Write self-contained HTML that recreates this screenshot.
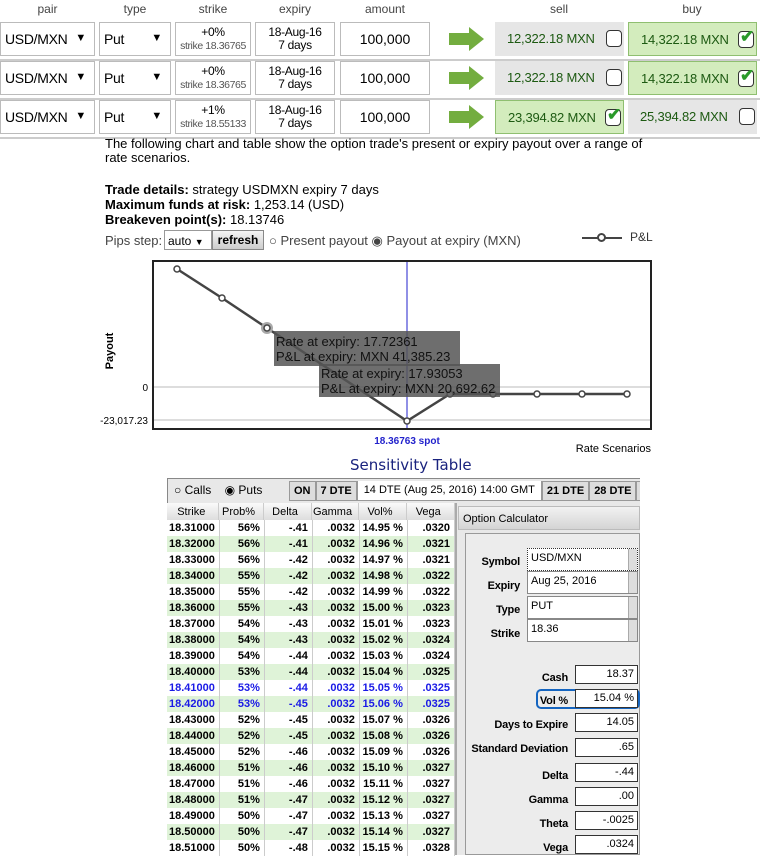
<!DOCTYPE html>
<html><head><style>
*{margin:0;padding:0;box-sizing:border-box}
body{width:760px;height:855px;overflow:hidden;background:#fff;font-family:"Liberation Sans",sans-serif;position:relative;color:#000}
.a{position:absolute}
.hd{font-size:12px;color:#444;text-align:center;top:2px}
.box{position:absolute;border:1px solid #bbb;background:#fff;font-size:14px;white-space:nowrap;overflow:hidden}
.sel{padding:8px 4px;font-size:14px;letter-spacing:-0.3px}
.tri{position:absolute;right:8px;top:9px;font-size:11px}
.c2{text-align:center;font-size:12px;line-height:13px;padding-top:3px;letter-spacing:-0.3px}
.c2 small{font-size:10.5px;color:#555;letter-spacing:-0.4px}
.amt{text-align:center;padding-top:8px}
.pr{position:absolute;font-size:13px;color:#1d5a12;padding-top:9px;padding-left:12px;letter-spacing:-0.2px;white-space:nowrap}
.cb{position:absolute;width:16px;height:17px;border:1.5px solid #333;border-radius:4px;background:#fff;top:8px;right:2px}
.ck{position:absolute;left:1px;top:-5px;color:#2a9a2a;font-size:17px;font-weight:bold}
table{border-collapse:collapse}
.tb td{height:16px;font-size:11px;font-weight:bold;text-align:right;padding-right:4px;border-right:1px solid #ccc}
.tb td:first-child{text-align:left;padding-left:2px}
.tb tr:nth-child(even) td{background:#dff3d8}
.tb tr.bl td{color:#1a1ae6}
.lb{position:absolute;font-size:11px;font-weight:bold;text-align:right;white-space:nowrap;letter-spacing:-0.2px}
.fld{position:absolute;border:1px solid #333;background:#fff;font-size:11px;text-align:right;padding:2px 3px;height:19px}
.dd{position:absolute;border:1px solid #888;background:#fff;font-size:11px;padding:3px 3px;height:23px;width:111px}
.dd:after{content:"";position:absolute;right:0;top:0;width:8px;height:21px;background:#ddd;border-left:1px solid #aaa}
</style></head><body>
<div class="a hd" style="left:0;width:95px">pair</div>
<div class="a hd" style="left:99px;width:72px">type</div>
<div class="a hd" style="left:175px;width:76px">strike</div>
<div class="a hd" style="left:255px;width:80px">expiry</div>
<div class="a hd" style="left:340px;width:90px">amount</div>
<div class="a hd" style="left:495px;width:128px">sell</div>
<div class="a hd" style="left:628px;width:128px">buy</div>

<div id="rows"></div>
<script>
var rs=[[22,"+0%","18.36765","12,322.18",false,"14,322.18",true],[61,"+0%","18.36765","12,322.18",false,"14,322.18",true],[100,"+1%","18.55133","23,394.82",true,"25,394.82",false]];
var h="";
rs.forEach(function(r){var y=r[0];
h+='<div class="box sel" style="left:0;top:'+y+'px;width:95px;height:34px">USD/MXN<span class="tri">▼</span></div>';
h+='<div class="box sel" style="left:99px;top:'+y+'px;width:72px;height:34px">Put<span class="tri">▼</span></div>';
h+='<div class="box c2" style="left:175px;top:'+y+'px;width:76px;height:34px">'+r[1]+'<br><small>strike '+r[2]+'</small></div>';
h+='<div class="box c2" style="left:255px;top:'+y+'px;width:80px;height:34px">18-Aug-16<br>7 days</div>';
h+='<div class="box amt" style="left:340px;top:'+y+'px;width:90px;height:34px">100,000</div>';
h+='<div class="a" style="left:449px;top:'+(y+11)+'px;width:20px;height:12px;background:#73ad3f"></div><div class="a" style="left:469px;top:'+(y+5)+'px;border-left:15px solid #73ad3f;border-top:12px solid transparent;border-bottom:12px solid transparent"></div>';
function p(x,v,c){return '<div class="pr" style="left:'+x+'px;top:'+y+'px;width:129px;height:34px;'+(c?'background:#d3ecbd;border:1px solid #8fbf70':'background:#e6e6e6')+'">'+v+' MXN<div class="cb">'+(c?'<span class="ck">✔</span>':'')+'</div></div>';}
h+=p(495,r[3],r[4])+p(628,r[5],r[6]);
h+='<div class="a" style="left:0;top:'+(y+37)+'px;width:760px;height:2px;background:#ccc"></div>';
});
document.getElementById("rows").innerHTML=h;
</script>

<div class="a" style="left:105px;top:137px;font-size:13px;line-height:14px;width:560px">The following chart and table show the option trade's present or expiry payout over a range of rate scenarios.</div>
<div class="a" style="left:105px;top:182px;font-size:13px;line-height:15px"><b>Trade details:</b> strategy USDMXN expiry 7 days<br><b>Maximum funds at risk:</b> 1,253.14 (USD)<br><b>Breakeven point(s):</b> 18.13746</div>
<div class="a" style="left:105px;top:233px;font-size:13px;color:#444">Pips step:</div>
<div class="a" style="left:164px;top:230px;width:48px;height:20px;border:1px solid #999;font-size:12px;padding:3px 3px;background:#fff">auto <span style="font-size:9px">▼</span></div>
<div class="a" style="left:212px;top:230px;width:52px;height:20px;border:1px solid #888;font-size:12px;font-weight:bold;text-align:center;padding-top:2px;background:linear-gradient(#f4f4f4,#ccc)">refresh</div>
<div class="a" style="left:269px;top:233px;font-size:13px;color:#444">○ Present payout ◉ Payout at expiry (MXN)</div>
<div class="a" style="left:582px;top:237px;width:40px;height:2px;background:#444"></div>
<div class="a" style="left:597px;top:233px;width:9px;height:9px;border:2px solid #444;border-radius:50%;background:#fff"></div>
<div class="a" style="left:630px;top:230px;font-size:12px;color:#333">P&amp;L</div>

<svg class="a" style="left:0;top:255px" width="760" height="200">
<rect x="153" y="6" width="498" height="168" fill="#fff" stroke="#222" stroke-width="2"/>
<line x1="154" y1="132" x2="650" y2="132" stroke="#bbb"/>
<line x1="154" y1="165" x2="650" y2="165" stroke="#bbb"/>
<line x1="407" y1="7" x2="407" y2="173" stroke="#22c" stroke-width="1"/>
<polyline points="177,14 222,43 267,73 407,166 450,139 493,139 537,139 582,139 627,139" fill="none" stroke="#444" stroke-width="2.5"/>
<circle cx="267" cy="73" r="6" fill="#aaa"/>
<g fill="#fff" stroke="#444" stroke-width="1.5"><circle cx="177" cy="14" r="3"/><circle cx="222" cy="43" r="3"/><circle cx="267" cy="73" r="3"/><circle cx="407" cy="166" r="3"/><circle cx="450" cy="139" r="3"/><circle cx="493" cy="139" r="3"/><circle cx="537" cy="139" r="3"/><circle cx="582" cy="139" r="3"/><circle cx="627" cy="139" r="3"/></g>
<rect x="274" y="76" width="186" height="35" fill="#555" opacity="0.85"/>
<rect x="319" y="109" width="181" height="33" fill="#555" opacity="0.85"/>
<g font-family="Liberation Sans" font-size="13" fill="#111">
<text x="276" y="91">Rate at expiry: 17.72361</text><text x="276" y="106">P&amp;L at expiry: MXN 41,385.23</text>
<text x="321" y="123">Rate at expiry: 17.93053</text><text x="321" y="138">P&amp;L at expiry: MXN 20,692.62</text></g>
<text x="113" y="96" font-family="Liberation Sans" font-size="11" font-weight="bold" transform="rotate(-90 113 96)" text-anchor="middle">Payout</text>
<text x="148" y="136" font-family="Liberation Sans" font-size="10" text-anchor="end">0</text>
<text x="148" y="169" font-family="Liberation Sans" font-size="10" text-anchor="end">-23,017.23</text>
<text x="407" y="189" font-family="Liberation Sans" font-size="10" font-weight="bold" fill="#22c" text-anchor="middle">18.36763 spot</text>
<text x="651" y="197" font-family="Liberation Sans" font-size="11" text-anchor="end">Rate Scenarios</text>
</svg>

<div class="a" style="left:350px;top:456px;font-size:15px;font-family:'DejaVu Sans';color:#1a237e">Sensitivity Table</div>

<div class="a" style="left:167px;top:478px;width:473px;height:377px;background:#e8e8e8;border-top:1px solid #888;border-left:1px solid #888"></div>
<div class="a" style="left:174px;top:483px;font-size:12px">○ Calls &nbsp;&nbsp; ◉ Puts</div>
<div class="a" style="left:289px;top:481px;font-size:11px;font-weight:bold;display:flex;white-space:nowrap;width:351px;overflow:hidden">
<span style="border:1px solid #999;padding:3px 4px;background:#ddd">ON</span>
<span style="border:1px solid #999;padding:3px 4px;background:#ddd">7 DTE</span>
<span style="border:1px solid #999;padding:4px 6px;background:#fff;font-weight:normal;margin-top:-2px">14 DTE (Aug 25, 2016) 14:00 GMT</span>
<span style="border:1px solid #999;padding:3px 4px;background:#ddd">21 DTE</span>
<span style="border:1px solid #999;padding:3px 4px;background:#ddd">28 DTE</span>
<span style="border:1px solid #999;padding:3px 4px;background:#ddd">35 DTE</span></div>

<div class="a" style="left:167px;top:503px;width:290px;height:352px;background:#fff;border-right:2px solid #aaa">
<table class="tb" style="width:288px">
<tr><td style="text-align:center;font-weight:normal;width:51px;height:17px;background:linear-gradient(#fafafa,#ddd)">Strike</td><td style="text-align:center;font-weight:normal;width:45px;background:linear-gradient(#fafafa,#ddd)">Prob%</td><td style="text-align:center;font-weight:normal;width:48px;background:linear-gradient(#fafafa,#ddd)">Delta</td><td style="text-align:center;font-weight:normal;width:47px;background:linear-gradient(#fafafa,#ddd)">Gamma</td><td style="text-align:center;font-weight:normal;width:48px;background:linear-gradient(#fafafa,#ddd)">Vol%</td><td style="text-align:center;font-weight:normal;background:linear-gradient(#fafafa,#ddd)">Vega</td></tr>
</table>
<table class="tb" style="width:288px" id="tb"></table>
</div>
<script>
var d=[[31,56,41,"14.95","0320"],[32,56,41,"14.96","0321"],[33,56,42,"14.97","0321"],[34,55,42,"14.98","0322"],[35,55,42,"14.99","0322"],[36,55,43,"15.00","0323"],[37,54,43,"15.01","0323"],[38,54,43,"15.02","0324"],[39,54,44,"15.03","0324"],[40,53,44,"15.04","0325"],[41,53,44,"15.05","0325"],[42,53,45,"15.06","0325"],[43,52,45,"15.07","0326"],[44,52,45,"15.08","0326"],[45,52,46,"15.09","0326"],[46,51,46,"15.10","0327"],[47,51,46,"15.11","0327"],[48,51,47,"15.12","0327"],[49,50,47,"15.13","0327"],[50,50,47,"15.14","0327"],[51,50,48,"15.15","0328"]];
var s="";d.forEach(function(r){s+='<tr'+(r[0]==41||r[0]==42?' class="bl"':'')+'><td style="width:51px">18.'+r[0]+'000</td><td style="width:45px">'+r[1]+'%</td><td style="width:48px">-.'+r[2]+'</td><td style="width:47px">.0032</td><td style="width:48px">'+r[3]+' %</td><td>.'+r[4]+'</td></tr>';});
document.getElementById("tb").innerHTML=s;
</script>

<div class="a" style="left:458px;top:506px;width:182px;height:24px;background:linear-gradient(#f2f2f2,#d4d4d4);font-size:11px;padding:6px 4px;border:1px solid #bbb">Option Calculator</div>
<div class="a" style="left:465px;top:533px;width:175px;height:322px;border:1px solid #999;background:#ececec"></div>
<div class="lb" style="left:470px;top:556px;width:50px">Symbol</div>
<div class="dd" style="left:527px;top:548px;border:1px dotted #333">USD/MXN</div>
<div class="lb" style="left:470px;top:580px;width:50px">Expiry</div>
<div class="dd" style="left:527px;top:571px">Aug 25, 2016</div>
<div class="lb" style="left:470px;top:604px;width:50px">Type</div>
<div class="dd" style="left:527px;top:596px">PUT</div>
<div class="lb" style="left:470px;top:628px;width:50px">Strike</div>
<div class="dd" style="left:527px;top:619px">18.36</div>
<div class="lb" style="left:460px;top:672px;width:108px">Cash</div><div class="fld" style="left:575px;top:665px;width:63px">18.37</div>
<div class="a" style="left:536px;top:689px;width:104px;height:20px;border:2px solid #1565c0;border-radius:5px"></div>
<div class="lb" style="left:460px;top:695px;width:108px">Vol %</div><div class="fld" style="left:575px;top:689px;width:63px">15.04 %</div>
<div class="lb" style="left:460px;top:719px;width:108px">Days to Expire</div><div class="fld" style="left:575px;top:713px;width:63px">14.05</div>
<div class="lb" style="left:460px;top:743px;width:108px">Standard Deviation</div><div class="fld" style="left:575px;top:738px;width:63px">.65</div>
<div class="lb" style="left:460px;top:770px;width:108px">Delta</div><div class="fld" style="left:575px;top:763px;width:63px">-.44</div>
<div class="lb" style="left:460px;top:794px;width:108px">Gamma</div><div class="fld" style="left:575px;top:787px;width:63px">.00</div>
<div class="lb" style="left:460px;top:818px;width:108px">Theta</div><div class="fld" style="left:575px;top:811px;width:63px">-.0025</div>
<div class="lb" style="left:460px;top:842px;width:108px">Vega</div><div class="fld" style="left:575px;top:835px;width:63px">.0324</div>
</body></html>
